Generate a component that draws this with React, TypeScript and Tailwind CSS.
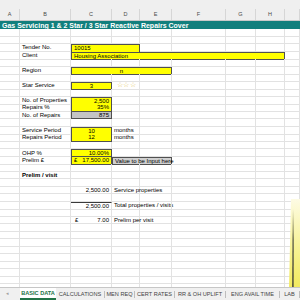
import React from "react";

type Cell = {
  span?: number;
  text?: React.ReactNode;
  box?: "y" | "g";
  top?: boolean;
  noBottom?: boolean;
  align?: "l" | "c" | "r";
  cls?: string;
};

const GRID = "grid grid-cols-[20px_51px_41px_28px_32px_54px_30px_29px_15px]";
const LETTERS = ["A", "B", "C", "D", "E", "F", "G", "H", ""];

const spanCls: Record<number, string> = {
  1: "",
  2: "col-span-2",
  3: "col-span-3",
  6: "col-span-6",
};

const money = (a: string, b: string) => (
  <span className="flex w-full justify-between">
    <span>{a}</span>
    <span>{b}</span>
  </span>
);

// rows below the title bar, one per sheet row
const rows: Cell[][] = [
  [],
  [],
  [{}, { text: "Tender No." }, { span: 2, text: "10015", box: "y", top: true, noBottom: true }],
  [{}, { text: "Client" }, { span: 6, text: "Housing Association", box: "y", top: true }],
  [],
  [{}, { text: "Region" }, { span: 3, text: "n", box: "y", top: true, align: "c" }],
  [],
  [
    {},
    { text: "Star Service" },
    { text: "3", box: "y", top: true, align: "c" },
    { text: <span className="text-[#e2c24a] text-[6.5px] tracking-[0.3px]">☆☆☆</span>, cls: "pl-[5px]" },
  ],
  [],
  [{}, { text: "No. of Properties" }, { text: "2,500", box: "y", top: true, align: "r" }],
  [{}, { text: "Repairs %" }, { text: "35%", box: "y", align: "r" }],
  [{}, { text: "No. of Repairs" }, { text: "875", box: "g", align: "r" }],
  [],
  [{}, { text: "Service Period" }, { text: "10", box: "y", top: true, align: "c" }, { text: "months" }],
  [{}, { text: "Repairs Period" }, { text: "12", box: "y", align: "c" }, { text: "months" }],
  [],
  [{}, { text: "OHP %" }, { text: "10.00%", box: "y", top: true, align: "r" }],
  [
    {},
    { text: "Prelim £" },
    { text: money("£", "17,500.00"), box: "y" },
    { span: 2, text: "Value to be Input here", box: "g", top: true, cls: "bg-[#d0d0d0]" },
  ],
  [],
  [{}, { text: <span className="font-bold">Prelim / visit</span> }],
  [],
  [{}, {}, { text: "2,500.00", align: "r" }, { text: "Service properties" }],
  [],
  [{}, {}, { text: "2,500.00", align: "r", cls: "border-t border-t-[#3a3a3a]" }, { text: "Total properties / visits" }],
  [],
  [{}, {}, { text: money("£", "7.00"), cls: "pl-[4px]" }, { text: "Prelim per visit" }],
];

function SheetRow({ cells }: { cells: Cell[] }) {
  const used = cells.reduce((n, c) => n + (c.span ?? 1), 0);
  const all = [...cells, ...Array.from({ length: 9 - used }, () => ({} as Cell))];
  return (
    <div className={`${GRID} h-[7.5px]`}>
      {all.map((c, i) => {
        let border = "border-r border-b border-[#e2e2e2]";
        if (c.box) {
          border = c.noBottom
            ? "border-x border-t border-[#505050]"
            : c.top
            ? "border border-[#505050]"
            : "border-x border-b border-[#505050]";
        }
        const bg = c.box === "y" ? "bg-[#ffff00]" : c.box === "g" ? "bg-[#c4c4c4]" : "";
        const just =
          c.align === "c" ? "justify-center" : c.align === "r" ? "justify-end" : "justify-start";
        return (
          <div
            key={i}
            className={`${spanCls[c.span ?? 1]} ${border} ${bg} ${just} flex items-center px-[2px] whitespace-nowrap leading-none ${c.cls ?? ""}`}
          >
            {c.text}
          </div>
        );
      })}
    </div>
  );
}

const tabs = [
  { name: "CALCULATIONS", w: "w-[49px]" },
  { name: "MEN REQ", w: "w-[30px]" },
  { name: "CERT RATES", w: "w-[40px]" },
  { name: "RR & OH UPLIFT", w: "w-[51px]" },
  { name: "ENG AVAIL TIME", w: "w-[54px]" },
  { name: "LAB", w: "w-[20px]" },
];

export default function App() {
  const filler = Array.from({ length: 12 }, () => [] as Cell[]);
  return (
    <div className="w-[300px] h-[300px] overflow-hidden bg-white flex flex-col font-['Liberation_Sans',Arial,sans-serif] text-[6px] text-black">
      {/* column headers */}
      <div className="h-[21px] shrink-0 bg-[#efefef] border-b border-[#c9c9c9] flex flex-col justify-end">
        <div className={`${GRID} h-[11px]`}>
          {LETTERS.map((l, i) => (
            <div
              key={i}
              className="border-r border-[#d6d6d6] flex items-center justify-center text-[5.5px] text-[#4a4a4a]"
            >
              {l}
            </div>
          ))}
        </div>
      </div>

      {/* sheet */}
      <div className="relative flex-1 overflow-hidden">
        <div className="h-[8px] bg-[#127f7d] text-white font-bold text-[7px] leading-none flex items-center pl-[2px] whitespace-nowrap">
          Gas Servicing 1 &amp; 2 Star / 3 Star Reactive Repairs Cover
        </div>
        {[...rows, ...filler].map((r, i) => (
          <SheetRow key={i} cells={r} />
        ))}

        {/* note shape peeking in on the right */}
        <svg className="absolute left-[289px] top-[178px]" width="11" height="90" viewBox="0 0 11 90">
          <defs>
            <linearGradient id="noteFill" x1="0" y1="0" x2="0" y2="1">
              <stop offset="0" stopColor="#fdfbe4" />
              <stop offset="0.5" stopColor="#f8f39a" />
              <stop offset="1" stopColor="#f1e95c" />
            </linearGradient>
            <linearGradient id="noteEdge" x1="0" y1="0" x2="0" y2="1">
              <stop offset="0" stopColor="#8a8a60" stopOpacity="0" />
              <stop offset="0.4" stopColor="#6a6a50" />
              <stop offset="1" stopColor="#3a3a30" />
            </linearGradient>
          </defs>
          <path d="M2 0 H11 V90 H0 Z" fill="url(#noteFill)" />
          <path d="M3.5 10 L5 10 L4.6 90 L3.2 90 Z" fill="url(#noteEdge)" />
        </svg>
      </div>

      {/* sheet tabs */}
      <div className="h-[13px] shrink-0 bg-[#f0f0f0] border-t border-[#c6c6c6] flex items-stretch text-[5.6px] text-[#444] whitespace-nowrap">
        <div className="w-[22px] flex items-center pl-[6px] text-[#a0a0a0] text-[5px]">◂</div>
        <div className="w-[41px] bg-white flex items-center justify-center font-bold text-[#217346] border-b-2 border-[#217346]">
          BASIC DATA
        </div>
        {tabs.map((t) => (
          <div key={t.name} className={`${t.w} shrink-0 flex items-center`}>
            <span className="flex-1 text-center">{t.name}</span>
            <span className="w-px h-[7px] bg-[#bdbdbd]" />
          </div>
        ))}
      </div>
    </div>
  );
}
